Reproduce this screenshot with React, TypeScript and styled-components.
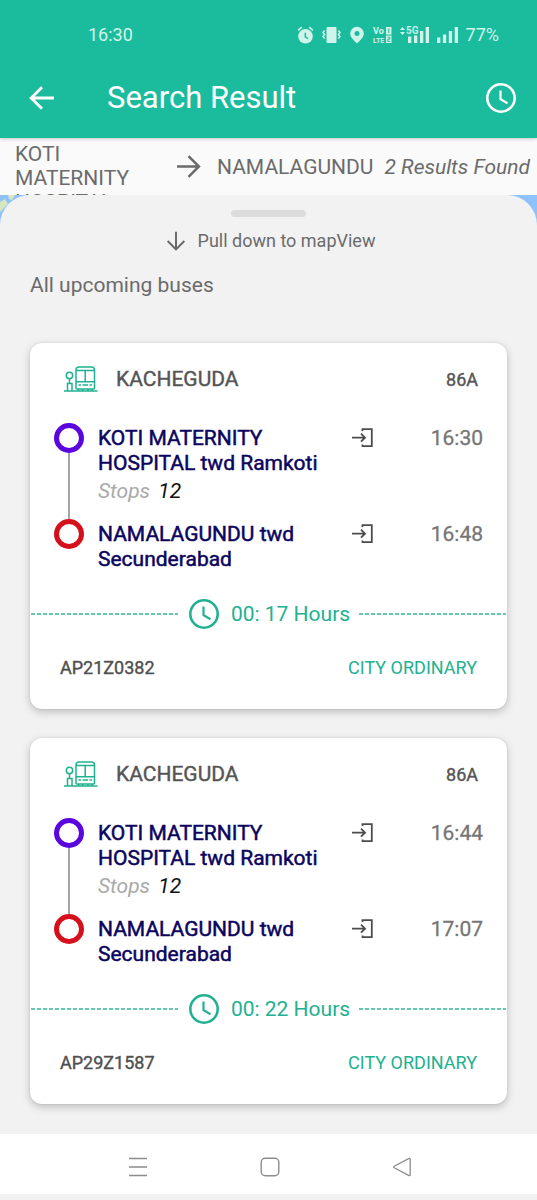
import React from "react";
import styled, { createGlobalStyle } from "styled-components";

const GREEN = "#1bbc9d";
const TEAL = "#22b190";

const GlobalStyle = createGlobalStyle`
  *, *::before, *::after { box-sizing: border-box; }
  body {
    margin: 0;
    background: #f2f2f2;
    font-family: Roboto, "Liberation Sans", sans-serif;
    color: #6b6b6b;
  }
  h1, h2, p, ul, ol { margin: 0; padding: 0; list-style: none; font-weight: 400; }
  svg { display: block; flex: none; }
`;

const Screen = styled.div`
  display: flex;
  flex-direction: column;
  min-height: 100vh;
`;

const Header = styled.header`
  position: relative;
  z-index: 1;
  background: ${GREEN};
  color: #fff;
  box-shadow: 0 1px 4px rgba(0, 0, 0, 0.2);
`;

const StatusBar = styled.div`
  display: flex;
  justify-content: space-between;
  align-items: center;
  padding: 23px 38px 0 88px;
  color: #d0f4ea;
  font-size: 18px;
  line-height: 24px;
`;

const StatusIcons = styled.div`
  display: flex;
  align-items: center;
  gap: 8px;
`;

const AppBar = styled.div`
  display: flex;
  align-items: center;
  padding: 24px 21px 14px 29px;
  height: 91px;
`;

const Title = styled.h1`
  flex: 1;
  margin-left: 52px;
  font-size: 31px;
  line-height: 36px;
`;

const IconButton = styled.button`
  display: flex;
  align-items: center;
  justify-content: center;
  padding: 0;
  border: 0;
  background: none;
  color: inherit;
  cursor: pointer;
`;

const RouteBar = styled.section`
  display: flex;
  align-items: center;
  height: 57px;
  padding: 0 3px 0 15px;
  overflow: hidden;
  background: #fafafa;
  font-size: 21px;
  line-height: 24px;
`;

const Origin = styled.p`
  flex: 0 1 161px;
  align-self: flex-start;
  padding: 4px 24px 0 0;
`;

const Destination = styled.p`
  margin-left: 16px;
`;

const ResultCount = styled.p`
  flex: 1;
  min-width: 0;
  margin-left: 11px;
  overflow: hidden;
  white-space: nowrap;
  font-style: italic;
`;

const MapArea = styled.main`
  position: relative;
  display: flex;
  flex: 1;
  flex-direction: column;
  background: #8fc2f8;
`;

const MapCorner = styled.svg`
  position: absolute;
  top: 0;
  left: 0;
`;

const Sheet = styled.div`
  position: relative;
  flex: 1;
  padding: 15px 30px 30px;
  border-radius: 30px 30px 0 0;
  background: #f2f2f2;
`;

const Handle = styled.div`
  width: 75px;
  height: 7px;
  margin: 0 auto;
  border-radius: 4px;
  background: #dcdcdc;
`;

const PullHint = styled.p`
  display: flex;
  align-items: center;
  justify-content: center;
  gap: 12px;
  margin-top: 12px;
  padding-left: 4px;
  font-size: 18px;
  line-height: 24px;
`;

const SectionTitle = styled.h2`
  margin-top: 20px;
  font-size: 21px;
  line-height: 24px;
`;

const CardList = styled.ul`
  display: flex;
  flex-direction: column;
  gap: 29px;
  margin-top: 46px;
`;

const Card = styled.li`
  padding-bottom: 29px;
  border-radius: 12px;
  background: #fff;
  box-shadow: 0 3px 9px rgba(0, 0, 0, 0.22), 0 0 2px rgba(0, 0, 0, 0.12);
`;

const CardHeader = styled.div`
  display: flex;
  align-items: center;
  padding: 22px 29px 0 34px;
  color: #555;
  -webkit-text-stroke: 0.4px currentColor;
`;

const Line = styled.h2`
  flex: 1;
  margin-left: 18px;
  font-size: 21px;
  line-height: 28px;
`;

const BusNumber = styled.span`
  font-size: 18px;
`;

const Stops = styled.ol`
  padding: 30px 24px 0;
`;

const StopRow = styled.li`
  display: flex;
`;

const Rail = styled.div`
  display: flex;
  flex-direction: column;
  align-items: center;
  width: 30px;
`;

const Ring = styled.span<{ $color: string }>`
  width: 30px;
  height: 30px;
  border: 5px solid ${(p) => p.$color};
  border-radius: 50%;
`;

const RailLine = styled.span`
  flex: 1;
  width: 2px;
  background: #a6a6a6;
`;

const StopText = styled.div<{ $last?: boolean }>`
  flex: 1;
  padding: 3px 0 ${(p) => (p.$last ? 0 : 16)}px 14px;
`;

const StopName = styled.p`
  max-width: 232px;
  color: #0b0560;
  font-size: 21px;
  line-height: 25px;
  -webkit-text-stroke: 0.5px currentColor;
`;

const StopCount = styled.p`
  margin-top: 3px;
  color: #a9a9a9;
  font-size: 21px;
  font-style: italic;
  line-height: 24px;

  b { margin-left: 3px; color: #111; font-weight: 400; }
`;

const EnterIcon = styled.svg`
  margin-top: 5px;
`;

const Time = styled.time`
  width: 110px;
  padding-top: 3px;
  color: #757575;
  font-size: 21px;
  line-height: 24px;
  text-align: right;
  -webkit-text-stroke: 0.3px currentColor;
`;

const Duration = styled.div`
  display: flex;
  align-items: center;
  margin-top: 27px;
  padding: 0 1px;
  color: ${TEAL};
  font-size: 21px;
  line-height: 30px;

  svg { margin: 0 12px 0 11px; }
`;

const Dashes = styled.span`
  flex: 1;
  height: 2px;
  background: repeating-linear-gradient(90deg, #62c8af 0 4px, transparent 4px 6px);
`;

const DurationText = styled.span`
  margin-right: 9px;
`;

const CardFooter = styled.div`
  display: flex;
  justify-content: space-between;
  margin-top: 27px;
  padding: 0 30px;
  color: #505050;
  font-size: 18px;
  line-height: 24px;
`;

const Plate = styled.span`
  -webkit-text-stroke: 0.4px currentColor;
`;

const Service = styled.span`
  color: ${TEAL};
`;

const NavBar = styled.nav`
  display: flex;
  align-items: center;
  justify-content: center;
  gap: 21%;
  height: 66px;
  padding: 6px 0 0 3px;
  border-bottom: 6px solid #f2f2f2;
  background: #fff;
  color: #8c8c8c;
`;

const ClockIcon = ({ size = 30 }: { size?: number }) => (
  <svg width={size} height={size} viewBox="0 0 30 30" fill="none" stroke="currentColor" aria-hidden>
    <circle cx="15" cy="15" r="13.7" strokeWidth="2.6" />
    <path d="M14.5 7.5v8.7l7 4" strokeWidth="2.2" />
  </svg>
);

const ArrowIcon = ({ turn = 0, size = 24, weight = 2.6 }: { turn?: number; size?: number; weight?: number }) => (
  <svg width={size} height={size} viewBox="0 0 24 24" fill="none" stroke="currentColor" strokeWidth={weight} aria-hidden>
    <path d="M1 12H22M12 2 22 12 12 22" transform={`rotate(${turn} 12 12)`} />
  </svg>
);

const BusStopIcon = () => (
  <svg width="34" height="26" viewBox="0 0 34 26" fill="none" stroke={TEAL} strokeWidth="1.5" aria-hidden>
    <path d="M0 25h33.5M5.5 12.500v5M3.500 25v-7.500h4.500v7.500" />
    <circle cx="5.500" cy="9.500" r="3.200" />
    <path d="M12 22V4q0-3 3-3h12.500q3 0 3 3v18q0 1-1 1h-16.500q-1 0-1-1zM12 4.600h18.500M12 15.700h18.500M21.200 4.600v11" />
    <path d="M14.500 19h2.500M18.500 19h5.500M25.500 19h2.500M14.500 23v2M18.500 23v2M24 23v2M28 23v2" />
  </svg>
);

const StatusGlyphs = () => (
  <StatusIcons>
    <svg width="17" height="18" viewBox="0 0 16 18" fill="currentColor" aria-hidden>
      <path d="M8 3a7.300 7.300 0 1 0 0 14.600A7.300 7.300 0 0 0 8 3z" />
      <path d="M.6 4.400 4.300 1.200M15.400 4.400 11.700 1.200" stroke="currentColor" strokeWidth="1.600" />
      <path d="M7.800 6.800v4l2.600 1.800" fill="none" stroke={GREEN} strokeWidth="1.500" />
    </svg>
    <svg width="19" height="18" viewBox="0 0 19 18" fill="currentColor" aria-hidden>
      <rect x="4.500" y="1" width="10" height="16" rx="1" />
      <path d="M2.600 4.500 1 6.500l1.600 2L1 10.500l1.600 2M16.400 4.500l1.600 2-1.600 2 1.600 2-1.600 2" fill="none" stroke="currentColor" strokeWidth="1.500" />
    </svg>
    <svg width="16" height="18" viewBox="0 0 16 18" fill="currentColor" aria-hidden>
      <path fillRule="evenodd" d="M8 .7a6.800 6.800 0 0 0-6.800 6.800C1.200 11.500 5.500 15 8 17.500c2.500-2.500 6.800-6 6.800-10A6.800 6.800 0 0 0 8 .7zm0 4.200a2.500 2.500 0 1 1 0 5 2.500 2.500 0 0 1 0-5z" />
    </svg>
    <svg width="19" height="18" viewBox="0 0 19 18" fill="currentColor" fontWeight="700" aria-hidden>
      <text x="0" y="8" fontSize="9">Vo</text>
      <text x="0" y="17" fontSize="7">LTE</text>
      <rect x="13" y="1" width="5.500" height="7.500" />
      <rect x="13" y="9.500" width="5.500" height="7.500" />
      <path d="M15.800 2.500v4.500M14.500 11.200h2.300v2h-2v2.200h2.300" fill="none" stroke={GREEN} strokeWidth="1" />
    </svg>
    <svg width="29" height="18" viewBox="0 0 29 18" fill="currentColor" aria-hidden>
      <path d="M0 4 2.500 1 5 4zM0 6l2.500 3L5 6z" />
      <text x="6" y="8" fontSize="10" fontWeight="600">5G</text>
      <path d="M8 10.500h3.300v6.500H8zM14 9.500h3.300v7.500H14zM20 5h3.300v12H20zM25.700 1h3.300v16h-3.300z" />
    </svg>
    <svg width="21" height="18" viewBox="0 0 21 18" fill="currentColor" aria-hidden>
      <path d="M0 11.500h3.300V17H0zM5.900 8.500h3.300V17H5.900zM11.800 5h3.300v12h-3.300zM17.700 1H21v16h-3.300z" />
    </svg>
    <span>77%</span>
  </StatusIcons>
);

const EntryGlyph = () => (
  <EnterIcon width="21" height="20" viewBox="0 0 21 20" fill="none" stroke="#4c4c4c" strokeWidth="1.800" aria-hidden>
    <path d="M10.500 3V1.200h9.300v17h-9.300V16.500M0 9.700h13M9 5.700l4 4-4 4" />
  </EnterIcon>
);

interface Bus {
  departs: string;
  arrives: string;
  minutes: string;
  plate: string;
}

const buses: Bus[] = [
  { departs: "16:30", arrives: "16:48", minutes: "17", plate: "AP21Z0382" },
  { departs: "16:44", arrives: "17:07", minutes: "22", plate: "AP29Z1587" },
];

const BusCard = ({ bus }: { bus: Bus }) => (
  <Card>
    <CardHeader>
      <BusStopIcon />
      <Line>KACHEGUDA</Line>
      <BusNumber>86A</BusNumber>
    </CardHeader>
    <Stops>
      <StopRow>
        <Rail>
          <Ring $color="#5b05df" />
          <RailLine />
        </Rail>
        <StopText>
          <StopName>KOTI MATERNITY HOSPITAL twd Ramkoti</StopName>
          <StopCount>
            Stops <b>12</b>
          </StopCount>
        </StopText>
        <EntryGlyph />
        <Time>{bus.departs}</Time>
      </StopRow>
      <StopRow>
        <Rail>
          <Ring $color="#d50f1c" />
        </Rail>
        <StopText $last>
          <StopName>NAMALAGUNDU twd Secunderabad</StopName>
        </StopText>
        <EntryGlyph />
        <Time>{bus.arrives}</Time>
      </StopRow>
    </Stops>
    <Duration>
      <Dashes />
      <ClockIcon />
      <DurationText>00: {bus.minutes} Hours</DurationText>
      <Dashes />
    </Duration>
    <CardFooter>
      <Plate>{bus.plate}</Plate>
      <Service>CITY ORDINARY</Service>
    </CardFooter>
  </Card>
);

export default function App() {
  return (
    <Screen>
      <GlobalStyle />
      <Header>
        <StatusBar>
          <span>16:30</span>
          <StatusGlyphs />
        </StatusBar>
        <AppBar>
          <IconButton aria-label="Back">
            <ArrowIcon turn={180} size={26} />
          </IconButton>
          <Title>Search Result</Title>
          <IconButton aria-label="History">
            <ClockIcon />
          </IconButton>
        </AppBar>
      </Header>
      <RouteBar>
        <Origin>KOTI MATERNITY HOSPITAL</Origin>
        <ArrowIcon size={25} weight={2.4} />
        <Destination>NAMALAGUNDU</Destination>
        <ResultCount>2 Results Found</ResultCount>
      </RouteBar>
      <MapArea>
        <MapCorner width="30" height="30" viewBox="0 0 30 30" aria-hidden>
          <path d="M0 7 5 4l3 5-8 8zM8 0h7l-3 5-3-1z" fill="#d6e6c0" />
        </MapCorner>
        <Sheet>
          <Handle />
          <PullHint>
            <ArrowIcon turn={90} size={20} weight={2.4} />
            Pull down to mapView
          </PullHint>
          <SectionTitle>All upcoming buses</SectionTitle>
          <CardList>
            {buses.map((bus) => (
              <BusCard key={bus.plate} bus={bus} />
            ))}
          </CardList>
        </Sheet>
      </MapArea>
      <NavBar>
        <IconButton aria-label="Recent apps">
          <svg width="20" height="20" viewBox="0 0 20 20" stroke="currentColor" strokeWidth="1.600" aria-hidden>
            <path d="M1 1.500h18M1 10h18M1 18.500h18" />
          </svg>
        </IconButton>
        <IconButton aria-label="Home">
          <svg width="20" height="20" viewBox="0 0 20 20" fill="none" stroke="currentColor" strokeWidth="1.400" aria-hidden>
            <rect x="1.200" y="1.200" width="17.600" height="17.600" rx="4" />
          </svg>
        </IconButton>
        <IconButton aria-label="Go back">
          <svg width="20" height="20" viewBox="0 0 20 20" fill="none" stroke="currentColor" strokeWidth="1.300" strokeLinejoin="round" aria-hidden>
            <path d="M2.200 9.200 16.600 1.600q1.600-.6 1.600 1v14.800q0 1.600-1.600 1L2.200 10.800q-1.200-.8 0-1.600z" />
          </svg>
        </IconButton>
      </NavBar>
    </Screen>
  );
}
